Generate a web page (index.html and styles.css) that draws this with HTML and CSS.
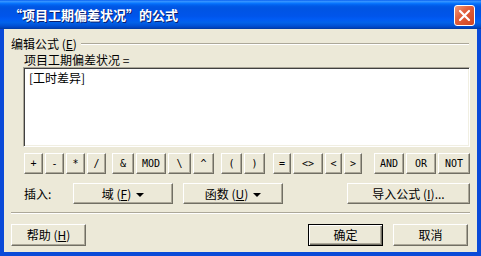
FILE: index.html
```html
<!DOCTYPE html>
<html lang="zh-CN">
<head>
    <meta charset="UTF-8">
    <title>公式</title>
    <link rel="stylesheet" href="styles.css">
</head>
<body>
    <div class="window">
        <div class="titlebar">
            <span class="title">“项目工期偏差状况”的公式</span>
            <span class="close">
                <svg width="21" height="21" viewBox="0 0 21 21">
                    <path d="M6 6 L15 15 M15 6 L6 15" stroke="#fff" stroke-width="2.2" stroke-linecap="round"/>
                </svg>
            </span>
        </div>
        <div class="client">
            <div class="group-head">
                <span class="group-label">编辑公式 (<u>E</u>)</span>
                <span class="group-line"></span>
            </div>
            <div class="formula-name">项目工期偏差状况 =</div>
            <div class="editor">[工时差异]</div>

            <!-- operator buttons -->
            <div class="ops">
                <div class="op-group">
                    <button class="btn op">+</button>
                    <button class="btn op">-</button>
                    <button class="btn op">*</button>
                    <button class="btn op">/</button>
                </div>
                <div class="op-group gap-b">
                    <button class="btn op w22">&amp;</button>
                    <button class="btn op w30">MOD</button>
                    <button class="btn op w23">\</button>
                    <button class="btn op w21">^</button>
                </div>
                <div class="op-group gap-c">
                    <button class="btn op w21">(</button>
                    <button class="btn op w21">)</button>
                </div>
                <div class="op-group gap-d">
                    <button class="btn op w18">=</button>
                    <button class="btn op w30">&lt;&gt;</button>
                    <button class="btn op w17">&lt;</button>
                    <button class="btn op w18">&gt;</button>
                </div>
                <div class="op-group gap-e">
                    <button class="btn op w30">AND</button>
                    <button class="btn op w30">OR</button>
                    <button class="btn op w32">NOT</button>
                </div>
            </div>

            <div class="insert-row">
                <span class="insert-label">插入:</span>
                <button class="btn btn-insert"><span>域 (<u>F</u>)</span><span class="arrow"></span></button>
                <button class="btn btn-insert"><span>函数 (<u>U</u>)</span><span class="arrow"></span></button>
                <button class="btn btn-import"><span>导入公式 (<u>I</u>)...</span></button>
            </div>

            <div class="separator"></div>

            <div class="footer">
                <button class="btn btn-dialog"><span>帮助 (<u>H</u>)</span></button>
                <div class="footer-right">
                    <button class="btn btn-dialog btn-default">确定</button>
                    <button class="btn btn-dialog">取消</button>
                </div>
            </div>
        </div>
    </div>
</body>
</html>
```

FILE: styles.css
```css
body {
    margin: 0;
    background: #ece9d8;
}

.window {
    width: 481px;
    height: 256px;
    display: flex;
    flex-direction: column;
    font-family: "Noto Sans CJK SC", "Liberation Sans", sans-serif;
    font-size: 12px;
    color: #000;
}

.titlebar {
    height: 29px;
    flex: none;
    display: flex;
    align-items: center;
    justify-content: space-between;
    padding: 0 6px 0 9px;
    background: linear-gradient(to bottom, #0058ee 0%, #3a93ff 4%, #288eff 7%, #127dff 10%, #036ffc 13%, #0262ee 17%, #0057e5 23%, #0054e3 30%, #0055eb 56%, #005bf5 66%, #0262e8 78%, #0052d6 88%, #0046c4 94%, #003a9e 100%);
}

.title {
    color: #fff;
    font-weight: bold;
    font-size: 13px;
    line-height: 16px;
    padding-top: 1px;
    font-feature-settings: "fwid";
    text-shadow: 1px 1px #0a1e6e;
}

.close {
    width: 21px;
    height: 21px;
    box-sizing: border-box;
    border: 1px solid #fff;
    border-radius: 3px;
    background: linear-gradient(135deg, #f09a7c 0%, #e2603d 40%, #cf4420 100%);
    display: flex;
    align-items: center;
    justify-content: center;
    margin-top: 1px;
}

.close svg {
    display: block;
    margin: -1px;
}

.client {
    flex: 1;
    display: flex;
    flex-direction: column;
    background: #ece9d8;
    border: 4px solid #0a4ad8;
    border-top: none;
    padding: 0 7px;
}

.group-head {
    display: flex;
    align-items: center;
    height: 14px;
    margin-top: 8px;
}

.group-label {
    line-height: 14px;
    padding-right: 4px;
}

.group-line {
    flex: 1;
    height: 0;
    border-top: 1px solid #aca899;
    border-bottom: 1px solid #fff;
    margin-right: 1px;
}

.formula-name {
    line-height: 14px;
    height: 14px;
    margin-top: 2px;
    padding-left: 13px;
}

.editor {
    margin-left: 12px;
    height: 80px;
    box-sizing: border-box;
    background: #fff;
    border: 1px solid;
    border-color: #aca899 #fff #fff #aca899;
    box-shadow: inset 1px 1px #404040, inset -1px -1px #f1efe2;
    padding: 3px 5px;
    line-height: 14px;
}

.btn {
    box-sizing: border-box;
    background: #ece9d8;
    border: 1px solid;
    border-color: #fff #716f64 #716f64 #fff;
    box-shadow: inset -1px -1px #aca899;
    font-family: "Noto Sans CJK SC", "Liberation Sans", sans-serif;
    font-size: 12px;
    color: #000;
    padding: 0;
    display: flex;
    align-items: center;
    justify-content: center;
    line-height: 14px;
}

.ops {
    display: flex;
    height: 21px;
    margin-top: 6px;
    padding-left: 13px;
}

.op-group {
    display: flex;
    gap: 2px;
}

.gap-b { margin-left: 6px; }
.gap-c { margin-left: 7px; }
.gap-d { margin-left: 8px; }
.gap-e { margin-left: 12px; }

.op {
    width: 19px;
    height: 21px;
    font-family: "DejaVu Sans Mono", "Liberation Mono", monospace;
    font-size: 10px;
}

.w17 { width: 17px; }
.w18 { width: 18px; }
.w21 { width: 21px; }
.w22 { width: 22px; }
.w23 { width: 23px; }
.w30 { width: 30px; }
.w32 { width: 32px; }

.insert-row {
    display: flex;
    align-items: center;
    height: 21px;
    margin-top: 9px;
    padding-left: 13px;
}

.insert-label {
    width: 49px;
}

.btn-insert {
    width: 100px;
    height: 21px;
    margin-right: 10px;
    gap: 5px;
}

.arrow {
    width: 0;
    height: 0;
    border-left: 4px solid transparent;
    border-right: 4px solid transparent;
    border-top: 4px solid #000;
    margin-top: 2px;
}

.btn-import {
    width: 123px;
    height: 21px;
    margin-left: auto;
}

.separator {
    margin-top: 8px;
    border-top: 1px solid #aca899;
    border-bottom: 1px solid #fff;
}

.footer {
    display: flex;
    justify-content: space-between;
    margin-top: 10px;
    padding-right: 2px;
}

.footer-right {
    display: flex;
    gap: 10px;
}

.btn-dialog {
    width: 75px;
    height: 22px;
}

.btn-default {
    border: 1px solid #000;
    box-shadow: inset 1px 1px #fff, inset -1px -1px #716f64, inset -2px -2px #aca899;
}
```
